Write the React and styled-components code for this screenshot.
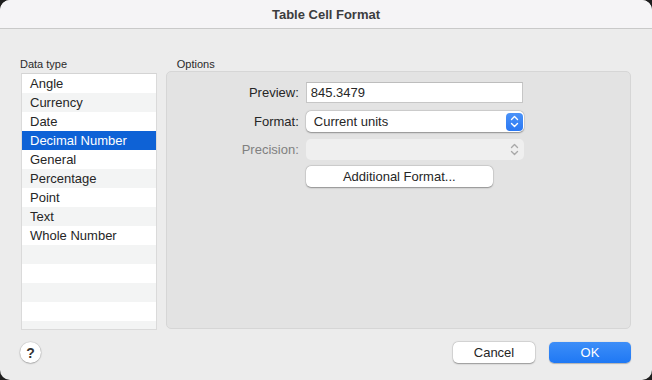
import React from 'react'
import styled, { createGlobalStyle } from 'styled-components'

const GlobalStyle = createGlobalStyle`
  html, body { margin: 0; padding: 0; background: #1e1e1e; }
  body { font-family: "Liberation Sans", Arial, sans-serif; font-size: 13px; color: #262626; }
`

const Window = styled.div`
  width: 652px;
  height: 380px;
  border-radius: 10px;
  overflow: hidden;
  background: #ececec;
  display: flex;
  flex-direction: column;
`

const TitleBar = styled.div`
  height: 28px;
  flex-shrink: 0;
  background: #f5f4f6;
  border-bottom: 1px solid #c9c9c9;
  display: flex;
  align-items: center;
  justify-content: center;
  font-weight: bold;
  font-size: 13px;
  color: #3c3c3e;
`

const Body = styled.div`
  flex: 1;
  display: flex;
  flex-direction: column;
  padding: 29px 21px 0 20px;
`

const Columns = styled.div`
  display: flex;
  gap: 9px;
`

const Group = styled.div`
  display: flex;
  flex-direction: column;
  width: ${p => p.$width}px;
`

const GroupLabel = styled.div`
  font-size: 11px;
  color: #2a2a2a;
  height: 13px;
  line-height: 13px;
  padding-left: ${p => p.$indent || 0}px;
  margin-bottom: ${p => p.$gap}px;
`

const List = styled.div`
  margin-left: 1px;
  height: 255px;
  border: 1px solid #dadada;
  border-top-color: #d4d4d4;
  background: #fff;
  overflow: hidden;
`

const Row = styled.div`
  height: 19px;
  line-height: 19px;
  padding-left: 8px;
  font-size: 13px;
  background: ${p => (p.$selected ? '#0e62d6' : p.$odd ? '#f3f4f4' : '#ffffff')};
  color: ${p => (p.$selected ? '#ffffff' : '#262626')};
`

const Panel = styled.div`
  box-sizing: border-box;
  height: 258px;
  background: #e3e3e3;
  border: 1px solid #d6d6d6;
  border-radius: 5px;
  display: flex;
  flex-direction: column;
  gap: 7px;
  padding-top: 10px;
`

const FieldRow = styled.div`
  display: flex;
  align-items: center;
  height: ${p => p.$h || 21}px;
`

const FieldLabel = styled.div`
  width: 132px;
  text-align: right;
  padding-right: 7px;
  font-size: 13px;
  color: ${p => (p.$disabled ? '#808080' : '#262626')};
`

const TextInput = styled.div`
  width: 211px;
  height: 19px;
  line-height: 19px;
  padding-left: 4px;
  background: #fff;
  border: 1px solid #c6c6c6;
  border-top-color: #bdbdbd;
  font-size: 13px;
`

const Select = styled.div`
  width: 218px;
  height: 21px;
  box-sizing: border-box;
  border-radius: 5px;
  background: ${p => (p.$disabled ? '#efefef' : '#ffffff')};
  box-shadow: ${p =>
    p.$disabled ? 'none' : '0 0.5px 1.5px rgba(0,0,0,0.35), 0 0 0 0.5px rgba(0,0,0,0.08)'};
  display: flex;
  align-items: center;
  justify-content: space-between;
  padding: 0 1px 0 8px;
  font-size: 13px;
`

const Stepper = styled.div`
  width: 17px;
  height: 18px;
  border-radius: 4px;
  background: ${p => (p.$disabled ? 'transparent' : 'linear-gradient(#4b93f8, #2a78f3)')};
  display: flex;
  align-items: center;
  justify-content: center;
`

const PushButton = styled.button`
  width: ${p => p.$w}px;
  height: 21px;
  border: none;
  border-radius: 5px;
  font-family: inherit;
  font-size: 13px;
  padding: 0;
  color: ${p => (p.$primary ? '#ffffff' : '#262626')};
  background: ${p => (p.$primary ? 'linear-gradient(#3d8ef8, #1f78f4)' : '#ffffff')};
  box-shadow: ${p =>
    p.$primary
      ? '0 0.5px 1px rgba(0,0,0,0.25)'
      : '0 0.5px 1.5px rgba(0,0,0,0.35), 0 0 0 0.5px rgba(0,0,0,0.08)'};
`

const Footer = styled.div`
  display: flex;
  align-items: center;
  margin-top: 12px;
`

const HelpButton = styled.div`
  width: 21px;
  height: 21px;
  border-radius: 50%;
  background: #fff;
  box-shadow: 0 0.5px 1.5px rgba(0,0,0,0.35), 0 0 0 0.5px rgba(0,0,0,0.08);
  display: flex;
  align-items: center;
  justify-content: center;
  font-size: 14px;
  font-weight: bold;
  color: #333;
`

const FooterButtons = styled.div`
  margin-left: auto;
  display: flex;
  gap: 14px;
`

const Chevrons = ({ color }) => (
  <svg width="9" height="13" viewBox="0 0 9 13" fill="none" stroke={color} strokeWidth="1.4" strokeLinecap="round" strokeLinejoin="round">
    <path d="M1.5 4.5 L4.5 1.5 L7.5 4.5" />
    <path d="M1.5 8.5 L4.5 11.5 L7.5 8.5" />
  </svg>
)

const types = ['Angle', 'Currency', 'Date', 'Decimal Number', 'General', 'Percentage', 'Point', 'Text', 'Whole Number']

export default function App() {
  const rows = Array.from({ length: 14 }, (_, i) => types[i] || '')
  return (
    <Window>
      <GlobalStyle />
      <TitleBar>Table Cell Format</TitleBar>
      <Body>
        <Columns>
          <Group $width={137}>
            <GroupLabel $gap={2}>Data type</GroupLabel>
            <List>
              {rows.map((t, i) => (
                <Row key={i} $odd={i % 2 === 1} $selected={t === 'Decimal Number'}>{t}</Row>
              ))}
            </List>
          </Group>
          <Group $width={466}>
            <GroupLabel $indent={11} $gap={0}>Options</GroupLabel>
            <Panel>
              <FieldRow>
                <FieldLabel>Preview:</FieldLabel>
                <TextInput>845.3479</TextInput>
              </FieldRow>
              <FieldRow $h={23}>
                <FieldLabel>Format:</FieldLabel>
                <Select>
                  Current units
                  <Stepper><Chevrons color="#ffffff" /></Stepper>
                </Select>
              </FieldRow>
              <FieldRow $h={19}>
                <FieldLabel $disabled>Precision:</FieldLabel>
                <Select $disabled>
                  <span />
                  <Stepper $disabled><Chevrons color="#a9a9a9" /></Stepper>
                </Select>
              </FieldRow>
              <FieldRow>
                <FieldLabel />
                <PushButton $w={187}>Additional Format...</PushButton>
              </FieldRow>
            </Panel>
          </Group>
        </Columns>
        <Footer>
          <HelpButton>?</HelpButton>
          <FooterButtons>
            <PushButton $w={82}>Cancel</PushButton>
            <PushButton $w={82} $primary>OK</PushButton>
          </FooterButtons>
        </Footer>
      </Body>
    </Window>
  )
}
